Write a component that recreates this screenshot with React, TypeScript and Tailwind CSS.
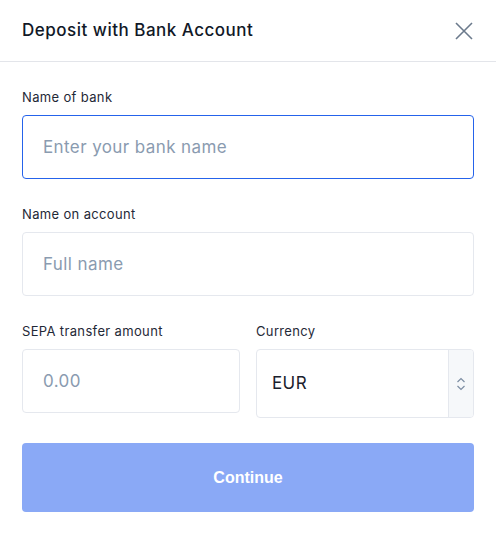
import React from 'react';

const App: React.FC = () => {
    return (
        <div className="w-[496px] h-[533px] bg-white font-['Inter',sans-serif] text-[#1a202c]">
            {/* Header */}
            <div className="h-[62px] flex items-center justify-between pl-[22px] pr-[22px] border-b border-[#e3e5ea]">
                <h2 className="text-[17px] font-medium tracking-[0.5px] text-[#111827]">Deposit with Bank Account</h2>
                <button type="button" className="w-5 h-5 flex items-center justify-center text-[#6b7a8c]">
                    <svg width="20" height="20" viewBox="0 0 20 20" fill="none" stroke="currentColor" strokeWidth="1.6">
                        <path d="M2 2L18 18M18 2L2 18" />
                    </svg>
                </button>
            </div>

            {/* Form */}
            <form className="px-[22px] pt-[25px]">
                <label className="block text-[13px] leading-[20px] tracking-[0.35px] text-[#1f2937] mb-2">Name of bank</label>
                <input
                    type="text"
                    placeholder="Enter your bank name"
                    className="block w-full h-[64px] px-5 rounded-[4px] border border-[#2563eb] text-[17px] tracking-[0.4px] placeholder-[#8a9bb0] outline-none"
                />

                <label className="block text-[13px] leading-[20px] tracking-[0.35px] text-[#1f2937] mt-[25px] mb-2">Name on account</label>
                <input
                    type="text"
                    placeholder="Full name"
                    className="block w-full h-[64px] px-5 rounded-[4px] border border-[#e5e8ee] text-[17px] tracking-[0.4px] placeholder-[#8a9bb0] outline-none"
                />

                <div className="grid grid-cols-2 gap-4 mt-[25px]">
                    <div>
                        <label className="block text-[13px] leading-[20px] tracking-[0.35px] text-[#1f2937] mb-2">SEPA transfer amount</label>
                        <input
                            type="text"
                            placeholder="0.00"
                            className="block w-full h-[64px] px-5 rounded-[4px] border border-[#e5e8ee] text-[17px] tracking-[0.4px] placeholder-[#8a9bb0] outline-none"
                        />
                    </div>
                    <div>
                        <label className="block text-[13px] leading-[20px] tracking-[0.35px] text-[#1f2937] mb-2">Currency</label>
                        <div className="flex h-[69px] rounded-[4px] border border-[#e5e8ee] overflow-hidden">
                            <div className="flex-1 flex items-center pl-[15px] text-[17px] tracking-[0.4px] text-[#1a202c]">EUR</div>
                            <div className="w-[25px] flex items-center justify-center bg-[#f6f8fa] border-l border-[#e5e8ee] text-[#7d8ea3]">
                                <svg width="10" height="16" viewBox="0 0 10 16" fill="none" stroke="currentColor" strokeWidth="1.2">
                                    <path d="M1.5 6L5 2.5L8.5 6M1.5 10L5 13.5L8.5 10" />
                                </svg>
                            </div>
                        </div>
                    </div>
                </div>

                <button
                    type="button"
                    className="mt-[25px] w-full h-[69px] rounded-[4px] bg-[#8aa9f6] text-white text-[16px] font-bold font-['Liberation_Sans',sans-serif]"
                >
                    Continue
                </button>
            </form>
        </div>
    );
};

export default App;
